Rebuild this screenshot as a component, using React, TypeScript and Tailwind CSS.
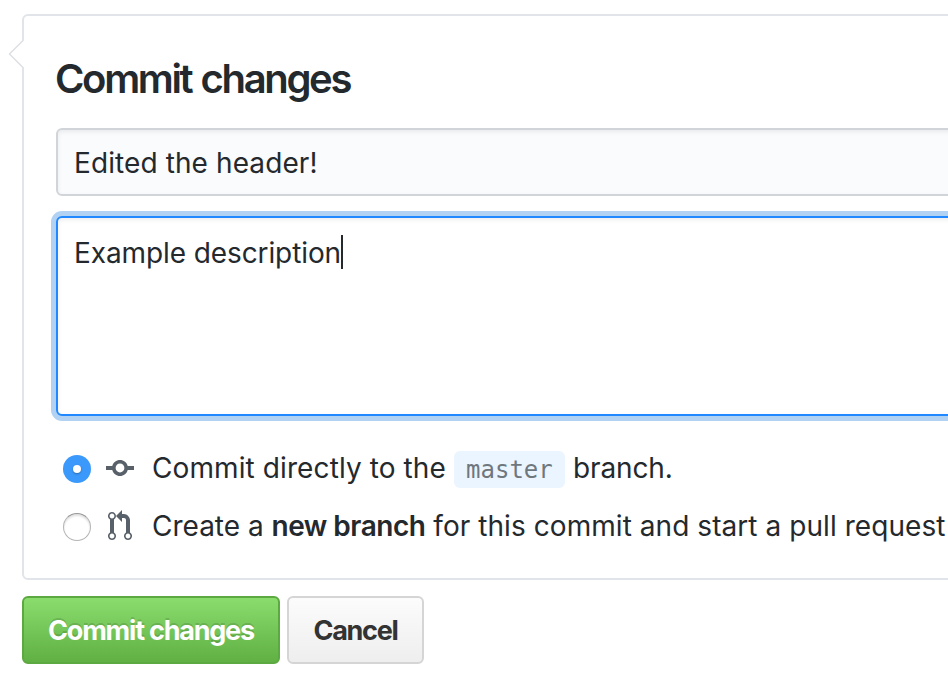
import type { ReactNode } from "react";

function CommitIcon() {
  return (
    <svg width="28" height="32" viewBox="0 0 14 16" fill="#586069" className="shrink-0">
      <path
        fillRule="evenodd"
        d="M10.86 7c-.45-1.72-2-3-3.86-3-1.86 0-3.41 1.28-3.86 3H0v2h3.14c.45 1.72 2 3 3.86 3 1.86 0 3.41-1.28 3.86-3H14V7h-3.14zM7 10.2c-1.22 0-2.2-.98-2.2-2.2 0-1.22.98-2.2 2.2-2.2 1.22 0 2.2.98 2.2 2.2 0 1.22-.98 2.2-2.2 2.2z"
      />
    </svg>
  );
}

function PullRequestIcon() {
  return (
    <svg width="24" height="32" viewBox="0 0 12 16" fill="#586069" className="shrink-0">
      <path
        fillRule="evenodd"
        d="M11 11.28V5c-.03-.78-.34-1.47-.94-2.06C9.46 2.35 8.78 2.03 8 2H7V0L4 3l3 3V4h1c.27.02.48.11.69.31.21.2.3.42.31.69v6.28A1.993 1.993 0 0 0 10 15a1.993 1.993 0 0 0 1-3.72zm-1 2.92c-.66 0-1.2-.55-1.2-1.2 0-.65.55-1.2 1.2-1.2.65 0 1.2.55 1.2 1.2 0 .65-.55 1.2-1.2 1.2zM4 3c0-1.11-.89-2-2-2a1.993 1.993 0 0 0-1 3.72v6.56A1.993 1.993 0 0 0 2 15a1.993 1.993 0 0 0 1-3.72V4.72c.59-.34 1-.98 1-1.72zm-.8 10c0 .66-.55 1.2-1.2 1.2-.65 0-1.2-.55-1.2-1.2 0-.65.55-1.2 1.2-1.2.65 0 1.2.55 1.2 1.2zM2 4.2C1.34 4.2.8 3.65.8 3c0-.65.55-1.2 1.2-1.2.65 0 1.2.55 1.2 1.2 0 .65-.55 1.2-1.2 1.2z"
      />
    </svg>
  );
}

function Radio({ checked }: { checked?: boolean }) {
  return checked ? (
    <span className="flex size-7 shrink-0 items-center justify-center rounded-full bg-[#3b99fc]">
      <span className="size-2 rounded-full bg-white shadow-[0_1px_2px_rgba(0,0,0,0.3)]" />
    </span>
  ) : (
    <span className="size-7 shrink-0 rounded-full border border-[#b4b4b4] border-t-[#969696] bg-white shadow-[inset_0_2px_2px_rgba(0,0,0,0.12)]" />
  );
}

function Option({ checked, icon, children }: { checked?: boolean; icon: ReactNode; children: ReactNode }) {
  return (
    <label className="flex h-[38px] items-center">
      <Radio checked={checked} />
      <span className="flex w-[61px] shrink-0 justify-center pr-[3px] pb-[2px]">{icon}</span>
      <span className="flex items-center pb-[2px] whitespace-pre">{children}</span>
    </label>
  );
}

export default function App() {
  return (
    <div className="h-[674px] w-[948px] overflow-hidden bg-white pt-[14px] pl-[22px] font-['Inter',sans-serif] text-[28px] leading-[38px] text-[#24292e]">
      <section className="relative h-[566px] w-[960px] rounded-[6px] border-2 border-[#e1e4e8] pt-[40px] pl-8">
        <svg width="17" height="30" viewBox="0 0 17 30" className="absolute top-[23px] -left-[16px]">
          <path d="M16 1v28h-2V1z" fill="#fff" />
          <path d="M16 1v28L2 15z" fill="#fff" />
          <path d="M15.500 1 1.500 15l14 14" fill="none" stroke="#dcdfe2" strokeWidth="1.400" />
        </svg>
        <h2 className="-ml-px h-[72px] text-[40px] leading-[46px] font-semibold tracking-[-2.35px] [word-spacing:1.5px]">
          Commit changes
        </h2>
        <div className="flex h-[68px] w-[940px] items-center rounded-[6px] border-2 border-[#d1d5da] bg-[#fafbfc] pt-[2px] pl-4 shadow-[inset_0_2px_4px_rgba(27,31,35,0.075)]">
          <span className="tracking-[0.1px]">Edited the header!</span>
        </div>
        <div className="mt-5 flex h-[200px] w-[940px] items-start rounded-[6px] border-2 border-[#2188ff] bg-white pt-[16px] pl-4 shadow-[inset_0_2px_4px_rgba(27,31,35,0.075),0_0_0_5px_#b1d2f3]">
          <span className="tracking-[-0.1px]">Example description</span>
          <span className="mt-px h-[34px] w-[2px] bg-[#24292e]" />
        </div>
        <div className="mt-[34px] flex flex-col gap-5 pl-[7px]">
          <Option checked icon={<CommitIcon />}>
            <span className="tracking-[0.1px]">Commit directly to the</span>
            <code className="mx-2 mt-[2px] flex h-[37px] w-[111px] items-center justify-center rounded-[6px] bg-[#eaf5ff] pt-px font-['DejaVu_Sans_Mono',monospace] text-[24px] text-[#6f777d]">
              master
            </code>
            <span className="tracking-[-0.1px]">branch.</span>
          </Option>
          <Option icon={<PullRequestIcon />}>
            <span>Create a </span>
            <strong className="font-semibold tracking-[-0.5px]">new branch</strong>
            <span className="tracking-[0.06px]"> for this commit and start a pull request</span>
          </Option>
        </div>
      </section>
      <div className="mt-4 flex gap-[7px] text-[27px] font-bold">
        <button className="h-[68px] w-[258px] rounded-[6px] border-2 border-[#5ca941] bg-linear-to-b from-[#8add6d] to-[#60b044] pt-[2px] tracking-[-1.22px] text-white [text-shadow:0_-2px_0_rgba(0,0,0,0.15)]">
          Commit changes
        </button>
        <button className="h-[68px] w-[137px] rounded-[6px] border-2 border-[#d5d5d5] bg-linear-to-b from-[#fcfcfc] to-[#eeeeee] pt-[2px] tracking-[-1.3px] text-[#333]">
          Cancel
        </button>
      </div>
    </div>
  );
}
